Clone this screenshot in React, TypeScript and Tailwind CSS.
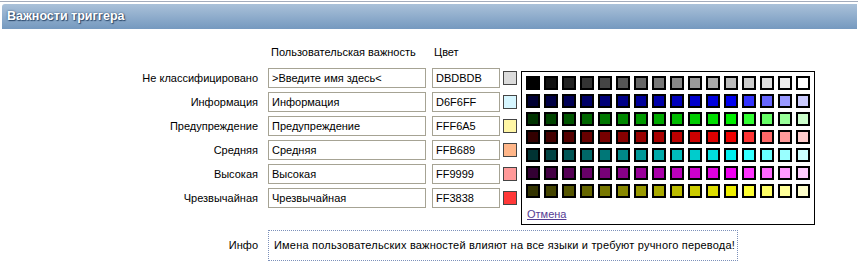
import React from "react"

interface Severity {
  label: string
  name: string
  color: string
}

const severities: Severity[] = [
  { label: "Не классифицировано", name: ">Введите имя здесь<", color: "DBDBDB" },
  { label: "Информация", name: "Информация", color: "D6F6FF" },
  { label: "Предупреждение", name: "Предупреждение", color: "FFF6A5" },
  { label: "Средняя", name: "Средняя", color: "FFB689" },
  { label: "Высокая", name: "Высокая", color: "FF9999" },
  { label: "Чрезвычайная", name: "Чрезвычайная", color: "FF3838" },
]

// палитра: серый ряд + 6 цветовых рядов (r, g, b маски)
const masks = [
  [0, 0, 1],
  [0, 1, 0],
  [1, 0, 0],
  [0, 1, 1],
  [1, 0, 1],
  [1, 1, 0],
]

const hex = (n: number) => n.toString(16).padStart(2, "0")

function buildPalette(): string[][] {
  const rows: string[][] = []
  const gray: string[] = []
  for (let i = 0; i < 16; i++) {
    const v = hex(i * 0x11)
    gray.push(`#${v}${v}${v}`)
  }
  rows.push(gray)
  for (const m of masks) {
    const row: string[] = []
    for (let i = 0; i < 16; i++) {
      let on: number
      let off: number
      if (i < 12) {
        on = 0x33 + i * 0x11
        off = 0
      } else {
        on = 0xff
        off = (i - 11) * 0x33
      }
      row.push(`#${m.map((b) => hex(b ? on : off)).join("")}`)
    }
    rows.push(row)
  }
  return rows
}

const palette = buildPalette()

export default function App() {
  return (
    <div className="relative w-[858px] h-[274px] bg-white text-[11px] leading-[13px] text-black font-['Liberation_Sans',Arial,sans-serif]">
      {/* верхняя линия */}
      <div className="mt-px h-px bg-[#a3acbc]" />

      {/* Заголовок */}
      <div className="mt-[2px] ml-0.5 mr-px h-[25px] rounded-tl-[3px] bg-gradient-to-b from-[#aac1d9] to-[#7599bf] flex items-center pl-[5px]">
        <span className="text-white font-bold text-[12.5px] [text-shadow:0_0_2px_#2d4a6c,1px_1px_1px_#2d4a6c]">
          Важности триггера
        </span>
      </div>

      <div className="pt-[13px]">
        {/* шапка колонок */}
        <div className="flex items-center h-5 mb-1.5">
          <div className="w-[258px]" />
          <div className="ml-2.5 w-[158px] pl-[3px]">Пользовательская важность</div>
          <div className="ml-1.5 w-[68px] pl-[2px]">Цвет</div>
        </div>

        {severities.map((s) => (
          <div key={s.label} className="flex items-center h-5 mb-1">
            <div className="w-[258px] text-right">{s.label}</div>
            <input
              readOnly
              value={s.name}
              className="ml-2.5 w-[158px] h-5 border border-[#a6a394] bg-white px-[3px] outline-none"
            />
            <input
              readOnly
              value={s.color}
              className="ml-1.5 w-[68px] h-5 border border-[#a6a394] bg-white px-[3px] outline-none"
            />
            <div
              className="ml-[3px] w-[14px] h-[14px] border border-[#444]"
              style={{ backgroundColor: `#${s.color}` }}
            />
          </div>
        ))}

        {/* Инфо */}
        <div className="flex items-center mt-[22px]">
          <div className="w-[258px] text-right">Инфо</div>
          <div className="ml-2.5 w-[470px] h-[31px] flex items-center border border-dotted border-[#7c90ba] pl-[5px] tracking-[0.2px]">
            Имена пользовательских важностей влияют на все языки и требуют ручного перевода!
          </div>
        </div>
      </div>

      {/* Палитра цветов */}
      <div className="absolute left-[521px] top-[70px] w-[294px] h-[154px] border border-black bg-white pl-1 pt-1">
        <div className="grid grid-cols-[repeat(16,14px)] gap-1">
          {palette.flat().map((c, i) => (
            <div key={i} className="w-[14px] h-[14px] border-2 border-black" style={{ backgroundColor: c }} />
          ))}
        </div>
        <div className="mt-2.5 pl-[1px]">
          <a href="#" className="text-[#553d94] underline">
            Отмена
          </a>
        </div>
      </div>
    </div>
  )
}
